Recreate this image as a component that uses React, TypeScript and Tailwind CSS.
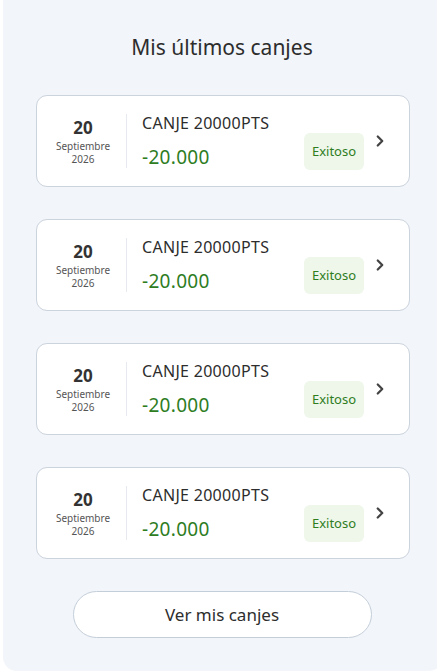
import { ChevronRight } from "lucide-react";

const canjes = [1, 2, 3, 4].map((i) => ({
  id: i,
  day: "20",
  month: "Septiembre",
  year: "2026",
  title: "CANJE 20000PTS",
  amount: "-20.000",
  status: "Exitoso",
}));

export default function App() {
  return (
    <div className="min-h-[671px] bg-white overflow-hidden font-['Noto_Sans',sans-serif]">
      <div className="ml-[3px] w-[440px] min-h-[671px] rounded-b-[14px] bg-[#f2f5f9] px-[33px] pt-[32px] pb-[32px] flex flex-col">
        <h2 className="text-center text-[21px] text-[#2d2d2d] leading-[30px] pr-[2px]">
          Mis últimos canjes
        </h2>

        <div className="mt-[33px] flex flex-col gap-[32px]">
          {canjes.map((c) => (
            <div
              key={c.id}
              className="h-[92px] rounded-[11px] border border-[#cbd3dd] bg-white flex items-center pl-[3px] pr-[20px]"
            >
              <div className="w-[86px] flex flex-col items-center text-center pt-[2px]">
                <span className="text-[17px] font-bold leading-[20px] text-[#333]">{c.day}</span>
                <span className="text-[10px] leading-[13px] text-[#555] mt-[2px]">{c.month}</span>
                <span className="text-[10px] leading-[13px] text-[#555]">{c.year}</span>
              </div>
              <div className="w-px self-stretch my-[18px] bg-[#e6eaef]" />
              <div className="flex-1 pl-[15px] self-stretch flex flex-col pt-[16px]">
                <span className="text-[16px] leading-[22px] tracking-[0.3px] text-[#2d2d2d]">{c.title}</span>
                <span className="mt-[11px] text-[19px] leading-[24px] tracking-[0.3px] text-[#2e7d1f]">{c.amount}</span>
              </div>
              <div className="self-stretch flex items-start pt-[37px]">
                <span className="h-[37px] w-[60px] rounded-[6px] bg-[#eef7e9] text-[#2e7d1f] text-[13px] flex items-center justify-center">
                  {c.status}
                </span>
              </div>
              <div className="self-stretch flex items-start pt-[36px] ml-[7px]">
                <ChevronRight className="w-[18px] h-[18px] text-[#444]" strokeWidth={3} />
              </div>
            </div>
          ))}
        </div>

        <button className="mt-[32px] mx-auto w-[299px] h-[47px] rounded-full border border-[#c4ced9] bg-white text-[17px] text-[#2d2d2d] translate-x-[-1px]">
          Ver mis canjes
        </button>
      </div>
    </div>
  );
}
